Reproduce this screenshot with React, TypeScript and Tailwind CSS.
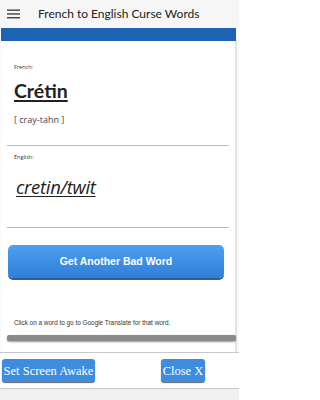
import React from "react";

export default function App() {
  return (
    <div className="w-[239px] h-[400px] bg-[#fbfbfb] overflow-hidden flex flex-col" style={{ fontFamily: '"Open Sans", sans-serif' }}>
      {/* header */}
      <div className="h-[28px] shrink-0 flex items-center bg-[#f6f6f6]">
        <svg width="13" height="10" viewBox="0 0 13 10" className="ml-[7px]">
          <rect x="0" y="0.5" width="13" height="1.3" fill="#333" />
          <rect x="0" y="4.3" width="13" height="1.3" fill="#333" />
          <rect x="0" y="8.1" width="13" height="1.3" fill="#333" />
        </svg>
        <span className="ml-[18px] text-[12px] text-[#222] leading-none" style={{ fontFamily: 'Lato, sans-serif' }}>French to English Curse Words</span>
      </div>
      {/* card */}
      <div className="flex flex-col pl-[1px] pr-[2px]">
        <div className="h-[13px] bg-[#1d62b3] mr-[1px]" />
        <div className="flex flex-col bg-white border-r-2 border-[#e4e4e4] px-[6px]">
          <div className="pl-[7px] pt-[24px] text-[5.5px] text-[#333] leading-none">French:</div>
          <div className="pl-[7px] mt-[10px] text-[19.5px] font-bold text-[#222] underline underline-offset-[2px] decoration-2 leading-none" style={{ fontFamily: 'Lato, sans-serif' }}>Crétin</div>
          <div className="pl-[7px] mt-[15px] text-[9px] text-[#444] leading-none">[ cray-tahn ]</div>
          <div className="mt-[21px] h-[1px] bg-[#bdbdbd]" />
          <div className="pl-[7px] pt-[9px] text-[5.5px] text-[#333] leading-none">English:</div>
          <div className="pl-[9px] mt-[17px] text-[18.5px] italic text-[#222] underline underline-offset-[2px] leading-none tracking-[-0.3px]">cretin/twit</div>
          <div className="mt-[31px] h-[1px] bg-[#bdbdbd]" />
          <div className="mt-[17px] mr-[5px] ml-[1px] h-[33px] rounded-[5px] bg-gradient-to-b from-[#4d9ff0] to-[#2f7fd8] shadow-[0_2px_0_#2a5f9e] flex items-center justify-center">
            <span className="text-white font-bold text-[10.5px] leading-none" style={{ fontFamily: '"Liberation Sans", Arial, sans-serif' }}>Get Another Bad Word</span>
          </div>
          <div className="pl-[7px] mt-[42px] text-[6.4px] text-[#333] leading-none" style={{ fontFamily: '"Liberation Sans", Arial, sans-serif' }}>Click on a word to go to Google Translate for that word.</div>
          <div className="mt-[9px] h-[6px] bg-[#8a8a8a] rounded-[2px] shadow-[0_1px_2px_#999] mr-[-7px]" />
          <div className="h-[11px]" />
        </div>
      </div>
      <div className="h-[1px] bg-[#c8c8c8]" />
      <div className="h-[35px] flex items-center bg-white">
        <div className="ml-[2px] h-[23px] w-[93px] rounded-[3px] bg-[#3d8ce0] shadow-[0_1px_1px_#666] flex items-center justify-center text-white text-[12.5px] leading-none" style={{ fontFamily: '"Liberation Serif", serif' }}>Set Screen Awake</div>
        <div className="ml-[66px] h-[23px] w-[44px] rounded-[3px] bg-[#3d8ce0] shadow-[0_1px_1px_#666] flex items-center justify-center text-white text-[12.5px] leading-none" style={{ fontFamily: '"Liberation Serif", serif' }}>Close X</div>
      </div>
      <div className="h-[1px] bg-[#c8c8c8]" />
      <div className="flex-1 bg-[#f0f0f0]" />
    </div>
  );
}
